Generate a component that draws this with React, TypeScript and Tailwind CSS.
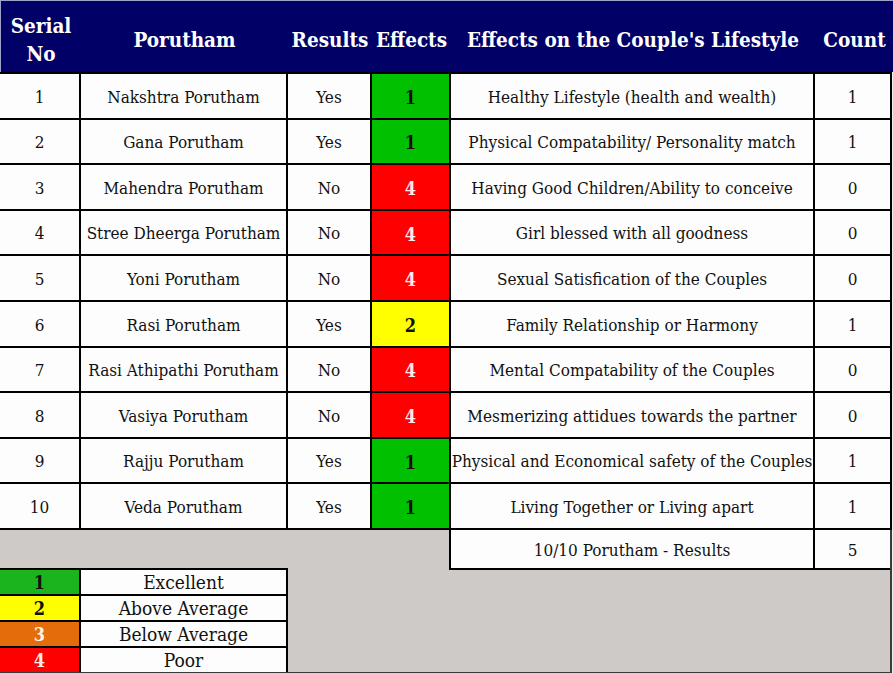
import React from "react";

type Row = [number, string, string, number, string, number];

const rows: Row[] = [
  [1, "Nakshtra Porutham", "Yes", 1, "Healthy Lifestyle (health and wealth)", 1],
  [2, "Gana Porutham", "Yes", 1, "Physical Compatability/ Personality match", 1],
  [3, "Mahendra Porutham", "No", 4, "Having Good Children/Ability to conceive", 0],
  [4, "Stree Dheerga Porutham", "No", 4, "Girl blessed with all goodness", 0],
  [5, "Yoni Porutham", "No", 4, "Sexual Satisfication of the Couples", 0],
  [6, "Rasi Porutham", "Yes", 2, "Family Relationship or Harmony", 1],
  [7, "Rasi Athipathi Porutham", "No", 4, "Mental Compatability of the Couples", 0],
  [8, "Vasiya Porutham", "No", 4, "Mesmerizing attidues towards the partner", 0],
  [9, "Rajju Porutham", "Yes", 1, "Physical and Economical safety of the Couples", 1],
  [10, "Veda Porutham", "Yes", 1, "Living Together or Living apart", 1],
];

const effectClass: Record<number, string> = {
  1: "bg-[#00c000] text-[#111]",
  2: "bg-[#ffff00] text-[#111]",
  3: "bg-[#e46c0a] text-[#fff4ec]",
  4: "bg-[#ff0000] text-[#ffe8e8]",
};

const legendClass: Record<number, string> = {
  1: "bg-[#1cb41c] text-[#111]",
  2: "bg-[#ffff00] text-[#111]",
  3: "bg-[#e46c0a] text-[#fff4ec]",
  4: "bg-[#ff0000] text-[#ffe8e8]",
};

const legend: [number, string][] = [
  [1, "Excellent"],
  [2, "Above Average"],
  [3, "Below Average"],
  [4, "Poor"],
];

const cell = "bg-[#fdfdfd] flex items-center justify-center pt-[3px] whitespace-nowrap";

export default function App() {
  return (
    <div className="w-[893px] h-[673px] bg-[#eeeeee] font-['DejaVu_Serif',serif] font-stretch-condensed text-[17px] text-[#111] overflow-hidden">
      {/* header */}
      <div className="h-[72px] bg-[#000066] text-white font-bold text-[20.5px] grid grid-cols-[80px_207px_84px_79px_364px_79px] leading-[28px] pt-[6px] border-t border-l border-[#9ea2c8]">
        <div className="flex items-center justify-center text-center">
          Serial
          <br />
          No
        </div>
        <div className="flex items-center justify-center">Porutham</div>
        <div className="flex items-center justify-center">Results</div>
        <div className="flex items-center justify-center">Effects</div>
        <div className="flex items-center justify-center">Effects on the Couple's Lifestyle</div>
        <div className="flex items-center justify-center">Count</div>
      </div>
      {/* body */}
      <div className="w-[892px] bg-black border-t-2 border-b-2 border-r-2 border-black grid grid-cols-[79px_205px_82px_77px_362px_75px] auto-rows-[43.6px] gap-[2px]">
        {rows.map((r) => (
          <React.Fragment key={r[0]}>
            <div className={cell}>{r[0]}</div>
            <div className={cell}>{r[1]}</div>
            <div className={cell}>{r[2]}</div>
            <div className={`flex items-center justify-center pt-[3px] font-bold text-[18px] ${effectClass[r[3]]}`}>{r[3]}</div>
            <div className={cell}>{r[4]}</div>
            <div className={cell}>{r[5]}</div>
          </React.Fragment>
        ))}
      </div>
      {/* bottom */}
      <div className="w-[892px] h-[144px] bg-[#cecac7] border-r-2 border-b-2 border-[#3a3a3a] flex">
        <div className="w-[449px] flex flex-col">
          <div className="h-[38px]" />
          <div className="w-[288px] bg-black border-t-2 border-r-2 border-black grid grid-cols-[79px_205px] auto-rows-[24px] gap-[2px] leading-none text-[19px]">
            {legend.map(([n, label]) => (
              <React.Fragment key={n}>
                <div className={`flex items-center justify-center pt-[2px] font-bold text-[18px] ${legendClass[n]}`}>{n}</div>
                <div className="bg-[#fdfdfd] flex items-center justify-center pt-[2px]">{label}</div>
              </React.Fragment>
            ))}
          </div>
        </div>
        <div className="w-[441px] h-[40px] bg-black border-l-2 border-b-2 border-black grid grid-cols-[362px_75px] gap-[2px]">
          <div className={cell}>10/10 Porutham - Results</div>
          <div className={cell}>5</div>
        </div>
      </div>
    </div>
  );
}
